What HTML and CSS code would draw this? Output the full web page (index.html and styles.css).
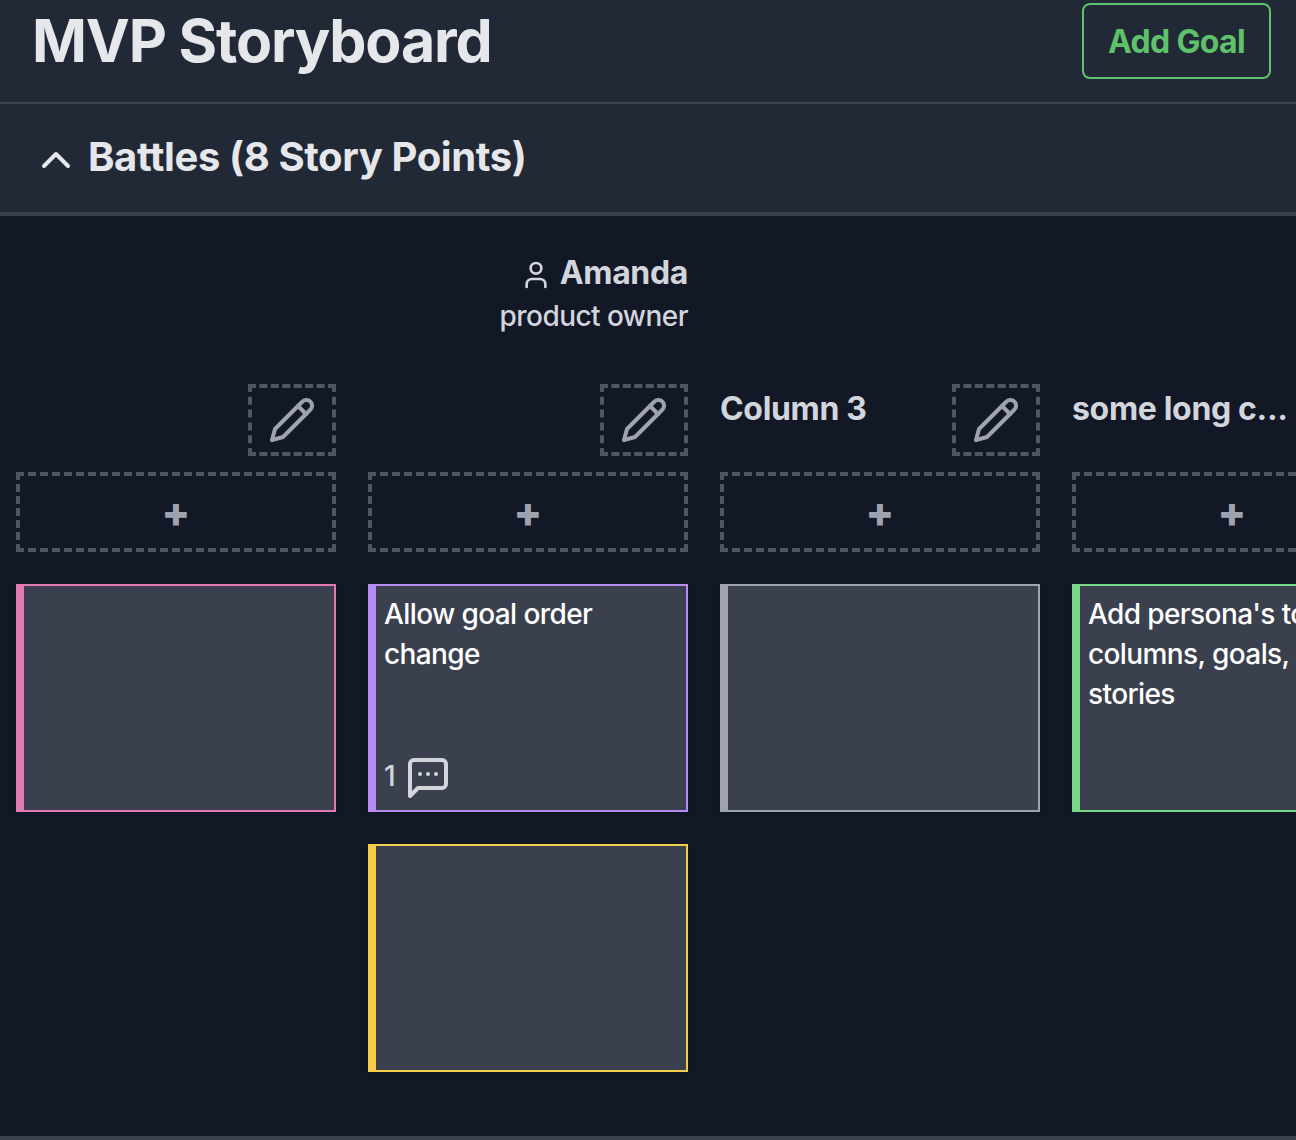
FILE: index.html
```html
<!DOCTYPE html>
<html lang="en">
<head>
<meta charset="utf-8">
<title>MVP Storyboard</title>
<link rel="stylesheet" href="styles.css">
</head>
<body>
<svg class="sprite" aria-hidden="true">
  <symbol id="pencil" viewBox="0 0 24 24"><path d="M17 3a2.85 2.83 0 1 1 4 4L7.5 20.5 2 22l1.5-5.5Z"/><path d="m15 5 4 4"/></symbol>
  <symbol id="user" viewBox="0 0 24 24"><path d="M19 21v-2a4 4 0 0 0-4-4H9a4 4 0 0 0-4 4v2"/><circle cx="12" cy="7" r="4"/></symbol>
  <symbol id="chevron" viewBox="0 0 24 24"><path d="m18 15-6-6-6 6"/></symbol>
  <symbol id="comment" viewBox="0 0 24 24"><path d="M21 15a2 2 0 0 1-2 2H7l-4 4V5a2 2 0 0 1 2-2h14a2 2 0 0 1 2 2z"/><path d="M8 10h.01M12 10h.01M16 10h.01"/></symbol>
</svg>
<header class="topbar">
  <h1 class="title">MVP Storyboard</h1>
  <button class="add-goal">Add Goal</button>
</header>
<section class="goal">
  <div class="goal-head">
    <svg class="icon"><use href="#chevron"/></svg>
    <h2 class="goal-name">Battles (8 Story Points)</h2>
  </div>
  <div class="columns">
    <div class="column">
      <div class="persona"></div>
      <div class="column-head"><span class="column-name"></span><button class="edit"><svg class="icon"><use href="#pencil"/></svg></button></div>
      <button class="add"><span class="plus">+</span></button>
      <div class="card pink"></div>
    </div>
    <div class="column">
      <div class="persona">
        <div class="persona-name"><svg class="icon small"><use href="#user"/></svg><span>Amanda</span></div>
        <div class="persona-role">product owner</div>
      </div>
      <div class="column-head"><span class="column-name"></span><button class="edit"><svg class="icon"><use href="#pencil"/></svg></button></div>
      <button class="add"><span class="plus">+</span></button>
      <div class="card purple">
        <p class="card-text">Allow goal order<br>change</p>
        <div class="comments"><span class="count">1</span><svg class="icon"><use href="#comment"/></svg></div>
      </div>
      <div class="card yellow"></div>
    </div>
    <div class="column">
      <div class="persona"></div>
      <div class="column-head"><span class="column-name">Column 3</span><button class="edit"><svg class="icon"><use href="#pencil"/></svg></button></div>
      <button class="add"><span class="plus">+</span></button>
      <div class="card gray"></div>
    </div>
    <div class="column">
      <div class="persona"></div>
      <div class="column-head"><span class="column-name">some long c...</span><button class="edit"><svg class="icon"><use href="#pencil"/></svg></button></div>
      <button class="add"><span class="plus">+</span></button>
      <div class="card green"><p class="card-text">Add persona's to<br>columns, goals,<br>stories</p></div>
    </div>
  </div>
</section>
</body>
</html>
```
FILE: styles.css
```css
* { box-sizing: border-box; margin: 0; }
html { overflow: hidden; }
body {
  height: 1140px;
  overflow: hidden;
  background: #121826;
  color: #d2d5db;
  font-family: Inter, "Liberation Sans", sans-serif;
}
button { padding: 0; background: none; font-family: inherit; }
.sprite { display: none; }
.icon {
  display: block;
  flex: none;
  width: 48px;
  height: 48px;
  fill: none;
  stroke: currentColor;
  stroke-width: 2;
  stroke-linecap: round;
  stroke-linejoin: round;
}
.small { width: 32px; height: 32px; }

.topbar {
  display: flex;
  justify-content: space-between;
  align-items: flex-start;
  height: 104px;
  padding: 3px 25px 0 32px;
  background: #222936;
  border-bottom: 2px solid #3b414f;
}
.title {
  color: #e5e7eb;
  font-size: 59px;
  line-height: 75px;
  font-weight: 700;
  letter-spacing: -1.15px;
  white-space: nowrap;
}
.add-goal {
  width: 189px;
  height: 76px;
  border: 2px solid #5fc26b;
  border-radius: 8px;
  color: #5fc26b;
  font-size: 32px;
  font-weight: 650;
  letter-spacing: -0.65px;
}

.goal { height: 1036px; border-bottom: 4px solid #3b414f; }
.goal-head {
  display: flex;
  align-items: center;
  gap: 8px;
  height: 112px;
  padding: 0 32px 0;
  background: #222936;
  border-bottom: 4px solid #3b414f;
  color: #e5e7eb;
}
.goal-head .icon { margin-top: 4px; }
.goal-name {
  margin-top: -2px;
  font-size: 40px;
  line-height: 60px;
  font-weight: 700;
  letter-spacing: -0.4px;
  white-space: nowrap;
}

.columns {
  display: flex;
  gap: 32px;
  width: 1296px;
  overflow: hidden;
  padding: 32px 16px 0;
}
.column { flex: none; width: 320px; }
.persona { height: 136px; text-align: right; }
.persona-name {
  display: flex;
  justify-content: flex-end;
  align-items: center;
  gap: 8px;
  height: 48px;
  font-size: 32px;
  font-weight: 700;
  letter-spacing: -0.35px;
}
.persona-name .icon { margin-top: 6px; }
.persona-role {
  font-size: 28px;
  line-height: 41px;
  font-weight: 450;
  letter-spacing: -0.55px;
}
.column-head {
  display: flex;
  justify-content: space-between;
  height: 72px;
  margin-bottom: 16px;
}
.column-name {
  font-size: 32px;
  line-height: 50px;
  font-weight: 700;
  letter-spacing: -0.33px;
  white-space: nowrap;
}
.edit, .add {
  display: flex;
  justify-content: center;
  align-items: center;
  border: 4px dashed #505664;
  color: #9fa3ae;
}
.edit { width: 88px; height: 72px; }
.add {
  width: 320px;
  height: 80px;
  margin-bottom: 32px;
  font-size: 42px;
  line-height: 48px;
  font-weight: 800;
}
.card {
  display: flex;
  flex-direction: column;
  justify-content: space-between;
  height: 228px;
  margin-bottom: 32px;
  padding: 8px;
  border: 2px solid;
  border-left-width: 8px;
  background: #3b404e;
  box-shadow: 0 2px 4px rgba(0, 0, 0, 0.1);
}
.pink { border-color: #e27bb1; }
.purple { border-color: #b78bf5; }
.yellow { border-color: #f5cd49; }
.gray { border-color: #9fa3ae; }
.green { border-color: #79d788; }
.card-text {
  color: #fff;
  font-size: 28px;
  line-height: 40px;
  font-weight: 450;
  letter-spacing: -0.6px;
  white-space: nowrap;
}
.comments {
  display: flex;
  align-items: center;
  gap: 8px;
  height: 48px;
  font-size: 28px;
}
.count { width: 12px; padding-bottom: 4px; font-weight: 450; }
```
